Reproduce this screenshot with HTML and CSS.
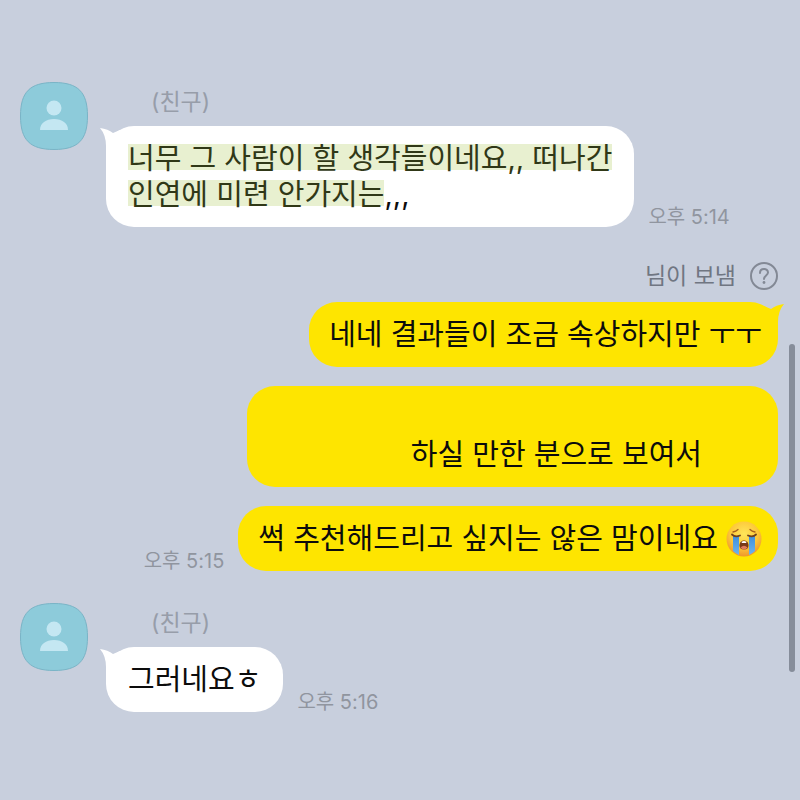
FILE: index.html
```html
<!DOCTYPE html>
<html lang="ko">
<head>
    <meta charset="UTF-8">
    <meta name="viewport" content="width=device-width, initial-scale=1.0">
    <title>채팅</title>
    <link rel="stylesheet" href="styles.css">
</head>
<body>
    <main class="chat">
        <section class="group friend">
            <svg class="avatar" viewBox="0 0 68 68" aria-hidden="true">
                <path class="avatar-bg" d="M34 .5C58 .5 67.500 10 67.500 34S58 67.500 34 67.500 .5 58 .5 34 10 .5 34 .5Z"/>
                <circle class="avatar-person" cx="34" cy="26" r="7.500"/>
                <path class="avatar-person" d="M20 48C20 41 26 37 34 37S48 41 48 48Z"/>
            </svg>
            <div class="messages">
                <div class="name">(친구)</div>
                <div class="row">
                    <div class="bubble">
                        <svg class="tail" viewBox="0 0 20 30" aria-hidden="true"><path d="M0 2Q8 3 13 7L20 4V30H6V20Q6 9 0 2Z"/></svg>
                        <p><mark>너무 그 사람이 할 생각들이네요,, 떠나간<br>인연에 미련 안가지는</mark>,,,</p>
                    </div>
                    <time>오후 5:14</time>
                </div>
            </div>
        </section>

        <section class="group mine">
            <div class="sender">
                <span>님이 보냄</span>
                <button type="button" class="help" aria-label="도움말">
                    <svg viewBox="0 0 28 28" aria-hidden="true">
                        <circle cx="14" cy="14" r="13"/>
                        <path d="M10 11C10 5.800 18 5.800 18 10.600C18 13.500 14 13.600 14 17"/>
                        <circle class="dot" cx="14" cy="20.500" r="1.400"/>
                    </svg>
                </button>
            </div>
            <div class="row">
                <div class="bubble">
                    <svg class="tail" viewBox="0 0 20 30" aria-hidden="true"><path d="M0 2Q8 3 13 7L20 4V30H6V20Q6 9 0 2Z"/></svg>
                    <p>네네 결과들이 조금 속상하지만 ㅜㅜ</p>
                </div>
            </div>
            <div class="row">
                <div class="bubble wide">
                    <p><br>하실 만한 분으로 보여서</p>
                </div>
            </div>
            <div class="row">
                <time>오후 5:15</time>
                <div class="bubble">
                    <p>썩 추천해드리고 싶지는 않은 맘이네요
                        <svg class="emoji" viewBox="0 0 36 36" role="img" aria-label="우는 얼굴">
                            <defs>
                                <radialGradient id="face" cx=".5" cy=".35" r=".65">
                                    <stop offset="0" stop-color="#ffe65a"/>
                                    <stop offset=".6" stop-color="#fdc83a"/>
                                    <stop offset="1" stop-color="#ee962b"/>
                                </radialGradient>
                                <linearGradient id="tear" x2="0" y2="1">
                                    <stop offset="0" stop-color="#3f8fdc"/>
                                    <stop offset="1" stop-color="#6db4ee"/>
                                </linearGradient>
                            </defs>
                            <circle cx="18" cy="18" r="17.500" fill="url(#face)"/>
                            <path d="M7 15H13V34Q9 32 7 30ZM23 15H29V30Q27 32 23 34Z" fill="url(#tear)"/>
                            <path d="M6 13.500Q9 16.500 14 14.500M22 14.500Q27 16.500 30 13.500" fill="none" stroke="#70401c" stroke-width="1.800" stroke-linecap="round"/>
                            <path d="M7 11Q10 10.500 12 8.500M24 8.500Q26 10.500 29 11" fill="none" stroke="#a8601d" stroke-width="1.300" stroke-linecap="round"/>
                            <path d="M18 19.500C21 19.500 22.500 22 22.500 24.500S21 28.500 18 28.500 13.500 27 13.500 24.500 15 19.500 18 19.500Z" fill="#7a3a18"/>
                            <path d="M14.500 26.500Q18 23 21.500 26.500Q20 28.500 18 28.500T14.500 26.500Z" fill="#e07a5c"/>
                            <path d="M15.500 21Q18 19 20.500 21L20 22H16Z" fill="#fff"/>
                        </svg></p>
                </div>
            </div>
        </section>

        <section class="group friend">
            <svg class="avatar" viewBox="0 0 68 68" aria-hidden="true">
                <path class="avatar-bg" d="M34 .5C58 .5 67.500 10 67.500 34S58 67.500 34 67.500 .5 58 .5 34 10 .5 34 .5Z"/>
                <circle class="avatar-person" cx="34" cy="26" r="7.500"/>
                <path class="avatar-person" d="M20 48C20 41 26 37 34 37S48 41 48 48Z"/>
            </svg>
            <div class="messages">
                <div class="name">(친구)</div>
                <div class="row">
                    <div class="bubble">
                        <svg class="tail" viewBox="0 0 20 30" aria-hidden="true"><path d="M0 2Q8 3 13 7L20 4V30H6V20Q6 9 0 2Z"/></svg>
                        <p>그러네요ㅎ</p>
                    </div>
                    <time>오후 5:16</time>
                </div>
            </div>
        </section>
    </main>
    <div class="scrollbar"></div>
</body>
</html>
```
FILE: styles.css
```css
* {
    box-sizing: border-box;
}
body {
    margin: 0;
    min-height: 100vh;
    background-color: #c8cfdd;
    font-family: Inter, 'Noto Sans CJK KR', sans-serif;
    font-size: 29px;
    line-height: 36px;
    color: #0c0c0c;
}
p {
    margin: 0;
}
.chat {
    padding: 82px 22px 82px 20px;
}
.group {
    display: flex;
}
.friend {
    gap: 18px;
}
.avatar {
    flex: none;
    width: 68px;
    height: 68px;
}
.avatar-bg {
    fill: #8dcbda;
    stroke: #7ab4c6;
}
.avatar-person {
    fill: #c4e7f2;
}
.messages {
    flex: 1;
}
.name {
    padding: 4px 0 8px 45px;
    font-size: 23px;
    line-height: 32px;
    color: #979da9;
}
.row {
    display: flex;
    align-items: flex-end;
    gap: 14px;
}
.bubble {
    position: relative;
    padding: 15px 22px 14px;
    border-radius: 28px;
    background-color: #fff;
}
.tail {
    position: absolute;
    top: 0;
    left: -6px;
    width: 20px;
    height: 30px;
    fill: #fff;
}
mark {
    color: #303817;
    background: linear-gradient(#e8f0d0, #e8f0d0) left top 3px / 100% 26px no-repeat;
    -webkit-box-decoration-break: clone;
    box-decoration-break: clone;
}
time {
    flex: none;
    font-size: 20px;
    line-height: 20px;
    color: #90959f;
}
.mine {
    flex-direction: column;
    gap: 19px;
    padding: 31px 0 32px;
}
.mine .row {
    justify-content: flex-end;
}
.mine .bubble {
    padding: 15px 16px 14px 20px;
    background-color: #fee500;
}
.mine .tail {
    left: auto;
    right: -6px;
    fill: #fee500;
    transform: scaleX(-1);
}
.mine .wide {
    width: 70%;
    padding-right: 76px;
    text-align: right;
}
.sender {
    display: flex;
    justify-content: flex-end;
    align-items: center;
    gap: 14px;
    margin-bottom: -11px;
    font-size: 23px;
    color: #707682;
}
.help {
    display: flex;
    padding: 0;
    border: none;
    background: none;
    cursor: pointer;
}
.help svg {
    width: 28px;
    height: 28px;
    fill: none;
    stroke: #838995;
    stroke-width: 2;
    stroke-linecap: round;
}
.help .dot {
    fill: #838995;
    stroke: none;
}
.emoji {
    width: 36px;
    height: 36px;
    vertical-align: -8px;
}
.scrollbar {
    position: fixed;
    top: 43%;
    right: 5px;
    width: 6px;
    height: 41%;
    border-radius: 3px;
    background-color: #868d9a;
}
```
